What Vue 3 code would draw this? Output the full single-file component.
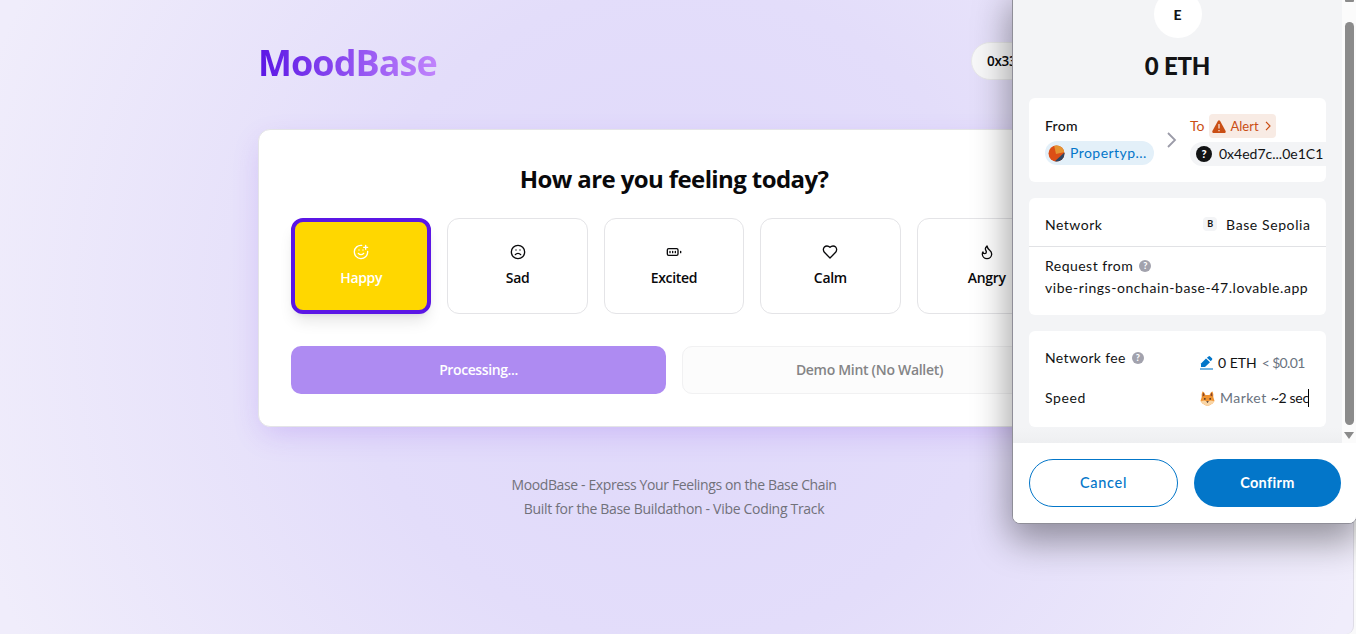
<script setup>
const moods = [
  { name: 'Happy', icon: 'happy', active: true },
  { name: 'Sad', icon: 'sad' },
  { name: 'Excited', icon: 'battery' },
  { name: 'Calm', icon: 'heart' },
  { name: 'Angry', icon: 'flame' },
]
</script>

<template>
  <div class="window">
    <div class="page">
      <main class="container">
        <header class="top">
          <h1 class="brand">MoodBase</h1>
          <div class="wallet">0x33a4...9f2c</div>
        </header>
        <section class="card">
          <h2>How are you feeling today?</h2>
          <div class="moods">
            <button v-for="m in moods" :key="m.name" class="mood" :class="{ active: m.active }">
              <svg class="micon" viewBox="0 0 24 24" fill="none" stroke="currentColor" stroke-width="2" stroke-linecap="round" stroke-linejoin="round">
                <template v-if="m.icon === 'happy'">
                  <path d="M22 11v1a10 10 0 1 1-9-10" />
                  <path d="M8 14s1.5 2 4 2 4-2 4-2" />
                  <path d="M9 9h.01M15 9h.01M16 5h6M19 2v6" />
                </template>
                <template v-else-if="m.icon === 'sad'">
                  <circle cx="12" cy="12" r="10" />
                  <path d="M16 16s-1.5-2-4-2-4 2-4 2M9 9h.01M15 9h.01" />
                </template>
                <template v-else-if="m.icon === 'battery'">
                  <rect width="16" height="10" x="2" y="7" rx="2" ry="2" />
                  <path d="M22 11v2M6 11v2M10 11v2M14 11v2" />
                </template>
                <path v-else-if="m.icon === 'heart'" d="M19 14c1.49-1.46 3-3.21 3-5.5A5.5 5.5 0 0 0 16.500 3c-1.760 0-3 .5-4.500 2-1.500-1.500-2.740-2-4.500-2A5.500 5.500 0 0 0 2 8.500c0 2.300 1.500 4.050 3 5.500l7 7Z" />
                <path v-else d="M8.500 14.500A2.500 2.500 0 0 0 11 12c0-1.380-.5-2-1-3-1.072-2.143-.224-4.054 2-6 .5 2.500 2 4.900 4 6.500 2 1.600 3 3.500 3 5.500a7 7 0 1 1-14 0c0-1.153.433-2.294 1-3a2.500 2.500 0 0 0 2.500 2.500z" />
              </svg>
              <span>{{ m.name }}</span>
            </button>
          </div>
          <div class="actions">
            <button class="mint">Processing...</button>
            <button class="demo">Demo Mint (No Wallet)</button>
          </div>
        </section>
        <footer class="foot">
          <p class="f1">MoodBase - Express Your Feelings on the Base Chain</p>
          <p class="f2">Built for the Base Buildathon - Vibe Coding Track</p>
        </footer>
      </main>
    </div>

    <aside class="popup">
      <div class="scroller">
        <div class="content">
          <div class="avatar">E</div>
          <div class="amount">0 ETH</div>
          <div class="panel transfer">
            <div class="side from">
              <div class="lab">From</div>
              <div class="acct">
                <svg width="17" height="17" viewBox="0 0 17 17">
                  <defs><clipPath id="disc"><circle cx="8.500" cy="8.500" r="8" /></clipPath></defs>
                  <g clip-path="url(#disc)">
                    <rect width="17" height="17" fill="#dc4e16" />
                    <path d="M6 0H17V7L8 9Z" fill="#e59432" />
                    <path d="M17 7V17H6Z" fill="#2d4664" />
                  </g>
                </svg>
                <span class="t-prop">Propertyp...</span>
              </div>
            </div>
            <svg class="arrow" width="10" height="16" viewBox="0 0 10 16" fill="none" stroke="#9b9ba8" stroke-width="1.800"><path d="M1 1l7 7-7 7" /></svg>
            <div class="side to">
              <div class="torow">
                <span class="tolab">To</span>
                <span class="alert">
                  <svg width="14" height="13" viewBox="0 0 14 13"><path d="M6 .8Q7-.4 8 .8L13.600 11Q14 12.800 12.600 13H1.400Q0 12.800.4 11Z" fill="#ca4e14" /><path d="M7 4v4.500M7 10v1.300" stroke="#f8ebe4" stroke-width="1.200" /></svg>
                  <span>Alert</span>
                  <svg class="ar" width="6" height="10" viewBox="0 0 6 10" fill="none" stroke="#ca4e14" stroke-width="1.200"><path d="M1 .8L5 5 1 9.200" /></svg>
                </span>
              </div>
              <div class="addr"><i class="q dark">?</i><span class="t-addr">0x4ed7c...0e1C1</span></div>
            </div>
          </div>
          <div class="panel netpanel">
            <div class="netrow">
              <span class="t-net">Network</span>
              <span class="net"><i class="b">B</i><span class="t-base">Base Sepolia</span></span>
            </div>
            <div class="req">
              <div class="reqlab"><span class="t-req">Request from</span><i class="q">?</i></div>
              <div class="site">vibe-rings-onchain-base-47.lovable.app</div>
            </div>
          </div>
          <div class="panel feepanel">
            <div class="feerow">
              <div class="feelab"><span class="t-fee">Network fee</span><i class="q">?</i></div>
              <div class="fee">
                <svg width="13" height="14" viewBox="0 0 13 14"><path d="M1 11V7.500L6 2.500l4 3.800L5 11Z" fill="#0376c9" /><path d="M6.900 1.700L8.500.4q.8-.7 1.600 0l1.900 1.800q.7.800 0 1.500L10.800 5.300Z" fill="#0376c9" /><path d="M0 12h13v2H0z" fill="#75b5e2" /></svg>
                <span class="t-eth">0 ETH</span><span class="t-usd">&lt; $0.01</span>
              </div>
            </div>
            <div class="speedrow">
              <span class="t-speed">Speed</span>
              <div class="speed">
                <svg width="15" height="15" viewBox="0 0 15 15">
                  <path d="M2.500.5Q4 0 5.500 4H9.500Q11 0 12.500.5 13.800 3 13.300 6L14.500 10 12.500 12.500 9 14.500H6L2.500 12.500.5 10 1.700 6Q1.200 3 2.500.5Z" fill="#f09432" />
                  <path d="M3 1.500Q4.500 2.500 4.600 4.500L2.500 5.500ZM12 1.500Q10.500 2.500 10.400 4.500L12.500 5.500Z" fill="#87452a" />
                  <path d="M.8 10L4.500 9.500 7.500 10.500 10.500 9.500 14.200 10 12.500 12.500 9 14.500H6L2.500 12.500Z" fill="#f9d5a5" />
                  <path d="M4.200 7h1.300v1.800H4.200zM9.500 7h1.300v1.800H9.500zM6.200 10.300h2.600L7.500 12Z" fill="#42302b" />
                </svg>
                <span class="t-market">Market</span><span class="t-sec">~2 sec</span>
              </div>
            </div>
          </div>
        </div>
        <div class="track">
          <div class="up"></div>
          <div class="thumb"></div>
          <div class="down"></div>
        </div>
      </div>
      <div class="buttons">
        <button class="cancel">Cancel</button>
        <button class="confirm">Confirm</button>
      </div>
    </aside>
  </div>
</template>

<style>
body { margin: 0; overflow: hidden; }
</style>

<style scoped>
* { box-sizing: border-box; }
button { margin: 0; padding: 0; font: inherit; border: 0; background: none; color: inherit; }
h1, h2, p { margin: 0; }
i { font-style: normal; }
.window { position: relative; width: 1356px; height: 634px; overflow: hidden; background: #f9f9fa; font-family: "Open Sans", "Noto Sans", sans-serif; color: #09090b; }
.page { width: 1354px; height: 634px; border-radius: 0 0 8px 0; border-right: 1px solid #dedce6; background: radial-gradient(circle at 50% 50%, #dfd8fa 0, #e3ddfa 330px, #f0edfb 730px); }
.container { width: 832px; margin-left: 258px; padding-top: 42px; }
.top { display: flex; justify-content: space-between; align-items: flex-start; height: 87px; }
.brand { font-size: 36px; line-height: 42px; font-weight: 700; letter-spacing: -.95px; background: linear-gradient(90deg, #5b16e5, #c084fc); -webkit-background-clip: text; background-clip: text; color: transparent; }
.wallet { width: 119px; height: 38px; border: 1px solid #e8e8ea; border-radius: 19px; background: #f8f8f9; font-size: 13.500px; font-weight: 600; line-height: 36px; padding-left: 15px; white-space: nowrap; overflow: hidden; letter-spacing: -.3px; }
.card { height: 298px; border: 1px solid #e4e4e7; border-radius: 12px; background: #fff; padding: 32px; box-shadow: 0 10px 30px -5px rgba(124, 58, 237, .22); display: flex; flex-direction: column; }
h2 { font-size: 24px; line-height: 34px; height: 32px; margin-bottom: 24px; font-weight: 700; text-align: center; letter-spacing: -.6px; }
.moods { display: grid; grid-template-columns: repeat(5, 1fr); gap: 16px; }
.mood { height: 96px; border: 1px solid #e4e4e7; border-radius: 12px; background: #fff; display: flex; flex-direction: column; align-items: center; padding-top: 25px; font-size: 14px; font-weight: 600; line-height: 20px; letter-spacing: -.3px; }
.mood span { margin-top: 8px; }
.micon { width: 16px; height: 16px; flex: none; }
.mood.active { border: 4px solid #5b16e5; background: #ffd700; color: #fff; padding-top: 22px; box-shadow: 0 10px 15px -3px rgba(0, 0, 0, .1), 0 4px 6px -4px rgba(0, 0, 0, .1); }
.actions { display: grid; grid-template-columns: 1fr 1fr; gap: 16px; margin-top: 32px; }
.mint, .demo { height: 48px; border-radius: 10px; font-size: 14px; font-weight: 600; letter-spacing: -.4px; padding-bottom: 2px; }
.mint { background: #ae8bf2; color: #fff; }
.demo { background: #fcfcfc; border: 1px solid #f1f1f2; color: #848486; letter-spacing: -.3px; }
.foot { margin-top: 46px; text-align: center; font-size: 14px; line-height: 24px; color: #71717a; }
.f1 { letter-spacing: -.38px; }
.f2 { letter-spacing: -.31px; }

.popup { position: absolute; left: 1012px; top: -10px; width: 345px; height: 534px; border: 1px solid #8f8e98; border-radius: 8px; background: #fff; box-shadow: 0 14px 36px 3px rgba(0, 0, 0, .38); overflow: hidden; font-family: Lato, "Open Sans", sans-serif; color: #121314; font-size: 14px; padding-top: 9px; }
.scroller { display: flex; height: 443px; }
.content { width: 329px; flex: none; background: linear-gradient(#f3f4f6 0 428px, #eeeff1 443px); padding: 0 16px; }
.avatar { width: 48px; height: 48px; border-radius: 50%; background: #fff; margin: -10px auto 0; text-align: center; font-weight: 900; line-height: 49px; }
.amount { height: 60px; line-height: 56px; text-align: center; font-size: 24px; font-weight: 900; letter-spacing: -.2px; }
.panel { width: 297px; border-radius: 6px; background: #fff; margin-bottom: 16px; overflow: hidden; }
.transfer { height: 84px; display: flex; padding: 16px 0 0 16px; }
.side { flex: none; }
.from { width: 109px; }
.lab { height: 27px; line-height: 24px; font-weight: 500; letter-spacing: .25px; }
.acct { width: 109px; height: 24px; border-radius: 12px; background: #e3f0f9; color: #0376c9; display: flex; align-items: center; padding-left: 3px; gap: 5px; }
.t-prop { letter-spacing: .45px; padding-bottom: 2px; }
.t-addr { padding-bottom: 2px; }
.arrow { margin: 18px 13px 0 13px; flex: none; }
.torow { display: flex; height: 28px; color: #ca4e14; align-items: flex-start; gap: 4px; line-height: 24px; }
.alert { display: flex; align-items: center; width: 67px; height: 24px; border-radius: 4px; background: #f8ebe4; font-size: 13px; padding-left: 3px; gap: 5px; }
.ar { margin-left: 1px; }
.addr { width: 150px; height: 24px; border-radius: 12px; background: #f3f4f6; display: flex; align-items: center; padding-left: 6px; gap: 7px; }
.q { display: block; width: 12px; height: 12px; border-radius: 50%; background: #a2a2ad; color: #fff; font-size: 9px; font-weight: 900; line-height: 12px; text-align: center; flex: none; }
.q.dark { width: 16px; height: 16px; background: #121314; line-height: 16px; font-size: 11px; }
.netpanel { height: 117px; }
.netrow { height: 49px; border-bottom: 1px solid #e1e2e5; padding: 4px 16px 0; display: flex; justify-content: space-between; align-items: center; }
.t-net { letter-spacing: .5px; }
.t-base { letter-spacing: .6px; margin-right: -.6px; }
.net { display: flex; align-items: center; gap: 9px; }
.b { width: 14px; height: 14px; border-radius: 4px; background: #f3f4f6; font-size: 9px; font-weight: 700; line-height: 14px; text-align: center; }
.req { padding: 8px 16px 0; line-height: 22px; }
.reqlab, .feelab { display: flex; align-items: center; gap: 6px; }
.t-req { letter-spacing: .47px; }
.t-fee { letter-spacing: .35px; }
.site { white-space: nowrap; letter-spacing: .56px; }
.feepanel { height: 96px; padding: 16px 16px 0; }
.feerow { display: flex; height: 40px; line-height: 22px; }
.feelab { height: 22px; width: 155px; }
.fee { display: flex; align-items: center; margin-top: 5px; height: 22px; gap: 5px; }
.t-usd { letter-spacing: -.65px; }
.t-speed { width: 155px; letter-spacing: .6px; }
.speedrow { display: flex; line-height: 22px; }
.speed { display: flex; align-items: center; gap: 5px; border-right: 1px solid #000; height: 18px; margin-top: 2px; white-space: nowrap; }
.t-market { letter-spacing: .45px; }
.t-sec { letter-spacing: -.3px; margin-left: -1px; margin-right: -.5px; }
.t-market, .t-usd { color: #6a7380; }
.track { flex: 1; background: #fbfbfb; display: flex; flex-direction: column; align-items: center; }
.up { width: 9px; height: 2px; background: #8b8b8b; border-radius: 0 0 1px 1px; }
.thumb { width: 9px; height: 403px; border-radius: 5px; margin-top: 20px; background: #8b8b8b; }
.down { margin-top: 7px; border: 5px solid transparent; border-top: 7px solid #8b8b8b; border-bottom: 0; }
.buttons { display: flex; gap: 16px; padding: 16px 0 0 16px; height: 80px; background: #fff; }
.cancel, .confirm { height: 48px; border-radius: 24px; font-weight: 500; padding-bottom: 2px; font-size: 14.500px; }
.cancel { width: 149px; border: 1px solid #0376c9; color: #0376c9; letter-spacing: .7px; }
.confirm { width: 147px; background: #0376c9; color: #fff; font-weight: 700; letter-spacing: .35px; }
</style>
